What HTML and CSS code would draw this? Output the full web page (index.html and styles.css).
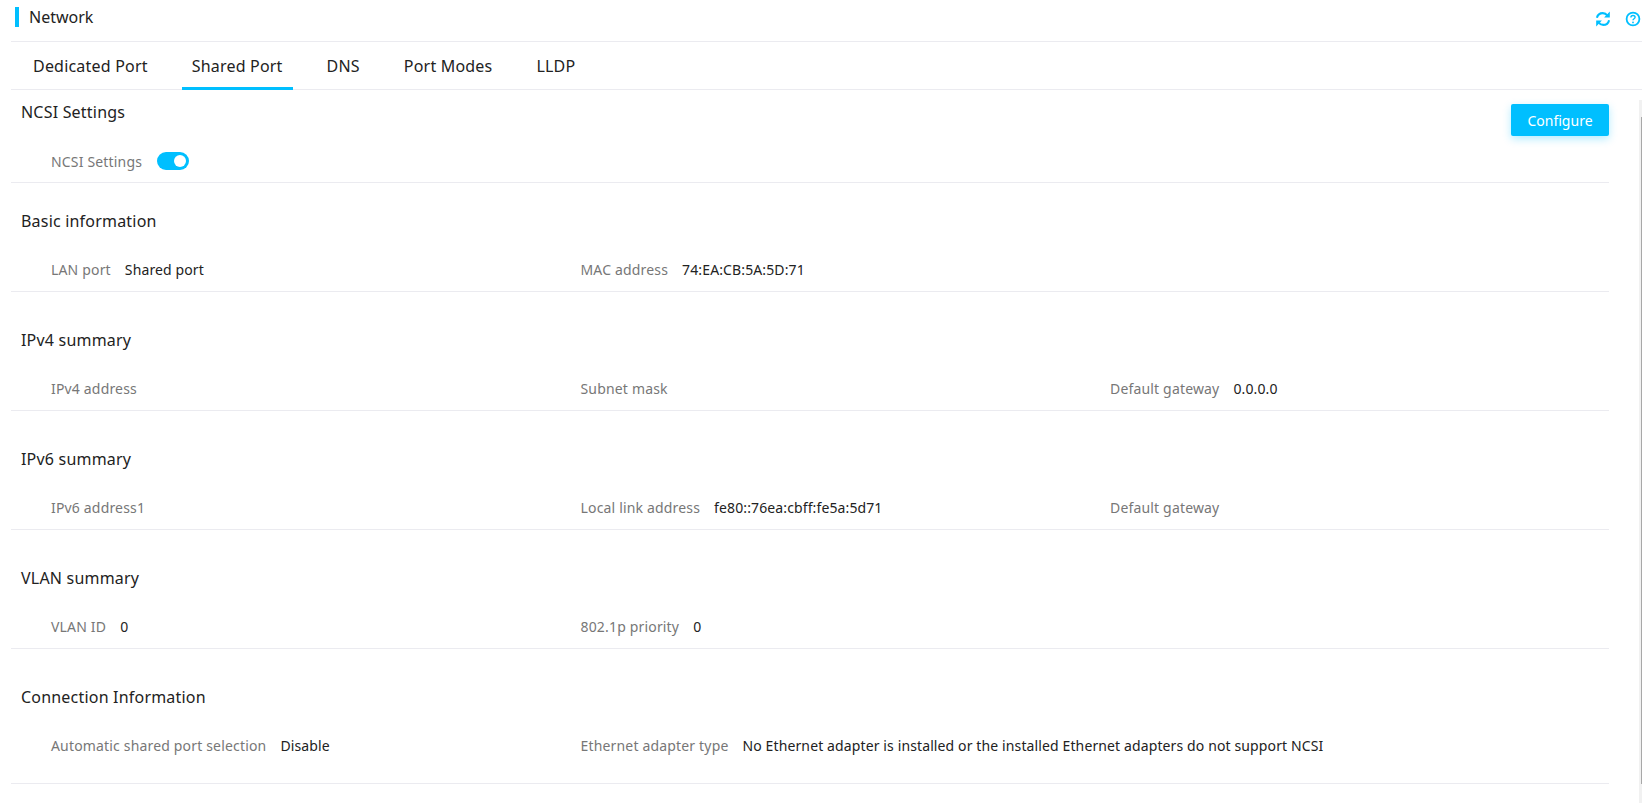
FILE: index.html
```html
<!DOCTYPE html>
<html lang="en">
<head>
<meta charset="utf-8">
<title>Network</title>
<link rel="stylesheet" href="styles.css">
</head>
<body>
<header class="top">
  <h1 class="title">Network</h1>
  <div class="tools">
    <svg class="icon" width="16" height="16" viewBox="0 0 16 16" fill="none" stroke="#00bfff" stroke-width="2.1"><path d="M1.9 6.8C2.6 3.9 5 2.1 7.8 2.1c1.9 0 3.4.8 4.5 2.4"/><path d="M14.8 .6v5.9H9.1" fill="#00bfff" stroke="none"/><path d="M14.1 9.2c-.7 2.9-3.1 4.7-5.9 4.7-1.9 0-3.4-.8-4.5-2.4"/><path d="M1.2 15.4V9.5h5.7" fill="#00bfff" stroke="none"/></svg>
    <svg class="icon" width="16" height="16" viewBox="0 0 16 16" fill="none" stroke="#00bfff"><circle cx="8" cy="8" r="6.4" stroke-width="1.8"/><path d="M5.9 6.4c0-1.2.9-1.9 2.1-1.9s2.1.7 2.1 1.8c0 1.5-2.1 1.5-2.1 3" stroke-width="1.4"/><circle cx="8" cy="11.4" r=".9" fill="#00bfff" stroke="none"/></svg>
  </div>
</header>
<nav class="tabs">
  <a class="tab">Dedicated Port</a>
  <a class="tab active">Shared Port</a>
  <a class="tab">DNS</a>
  <a class="tab">Port Modes</a>
  <a class="tab">LLDP</a>
</nav>
<div class="body">
  <main class="content">
    <section class="section first">
      <div class="section-head">
        <h2 class="section-title">NCSI Settings</h2>
        <button class="btn" type="button">Configure</button>
      </div>
      <div class="row">
        <div class="item"><span class="label">NCSI Settings</span><span class="switch"><span class="knob"></span></span></div>
      </div>
    </section>
    <section class="section basic">
      <h2 class="section-title">Basic information</h2>
      <div class="row">
        <div class="item"><span class="label">LAN port</span><span class="value">Shared port</span></div>
        <div class="item"><span class="label">MAC address</span><span class="value">74:EA:CB:5A:5D:71</span></div>
      </div>
    </section>
    <section class="section">
      <h2 class="section-title">IPv4 summary</h2>
      <div class="row">
        <div class="item"><span class="label">IPv4 address</span></div>
        <div class="item"><span class="label">Subnet mask</span></div>
        <div class="item"><span class="label">Default gateway</span><span class="value">0.0.0.0</span></div>
      </div>
    </section>
    <section class="section">
      <h2 class="section-title">IPv6 summary</h2>
      <div class="row">
        <div class="item"><span class="label">IPv6 address1</span></div>
        <div class="item"><span class="label">Local link address</span><span class="value">fe80::76ea:cbff:fe5a:5d71</span></div>
        <div class="item"><span class="label">Default gateway</span></div>
      </div>
    </section>
    <section class="section">
      <h2 class="section-title">VLAN summary</h2>
      <div class="row">
        <div class="item"><span class="label">VLAN ID</span><span class="value">0</span></div>
        <div class="item"><span class="label">802.1p priority</span><span class="value">0</span></div>
      </div>
    </section>
    <section class="section last">
      <h2 class="section-title">Connection Information</h2>
      <div class="row">
        <div class="item"><span class="label">Automatic shared port selection</span><span class="value">Disable</span></div>
        <div class="item wide"><span class="label">Ethernet adapter type</span><span class="value">No Ethernet adapter is installed or the installed Ethernet adapters do not support NCSI</span></div>
      </div>
    </section>
  </main>
  <div class="scrollbar"><div class="thumb"></div></div>
</div>
</body>
</html>
```
FILE: styles.css
```css
* { box-sizing: border-box; }
html, body { margin: 0; height: 100%; overflow: hidden; }
body {
  background: #fff;
  color: #222;
  font-family: "Noto Sans", "Open Sans", sans-serif;
  display: flex;
  flex-direction: column;
}
.top {
  height: 42px;
  margin-left: 11px;
  border-bottom: 1px solid #ebebf0;
  display: flex;
  align-items: flex-start;
  justify-content: space-between;
  flex: none;
}
.title {
  margin: 7px 0 0 4px;
  padding-left: 10px;
  border-left: 4px solid #00bfff;
  height: 20px;
  font-size: 16px;
  line-height: 20px;
  font-weight: 400;
}
.tools {
  display: flex;
  gap: 14px;
  margin: 11px 1px 0 0;
}
.icon { display: block; }
.tabs {
  height: 48px;
  margin-left: 11px;
  padding-left: 12px;
  border-bottom: 1px solid #ebebf0;
  display: flex;
  gap: 24px;
  flex: none;
}
.tab {
  height: 48px;
  padding: 0 10px;
  font-size: 16px;
  letter-spacing: .2px;
  line-height: 48px;
}
.tab.active { border-bottom: 3px solid #00bfff; }
.body { flex: 1; display: flex; min-height: 0; }
.content { flex: 1; min-width: 0; padding: 0 30px 0 11px; }
.section {
  height: 119px;
  border-bottom: 1px solid #ebebf0;
}
.section.first { height: 93px; }
.section.basic { height: 109px; }
.section.last { height: 135px; }
.section-head {
  display: flex;
  justify-content: space-between;
  align-items: flex-start;
  height: 0;
}
.section-title {
  margin: 0;
  padding: 37px 0 0 10px;
  font-size: 16px;
  letter-spacing: .2px;
  line-height: 22px;
  font-weight: 400;
}
.first .section-title { padding-top: 11px; }
.basic .section-title { padding-top: 27px; }
.btn {
  margin-top: 14px;
  width: 98px;
  height: 32px;
  border: 0;
  border-radius: 2px;
  background: #00bfff;
  color: #fff;
  font: inherit;
  font-size: 14px;
  box-shadow: 0 3px 8px rgba(0, 191, 255, .3);
}
.row {
  display: grid;
  grid-template-columns: repeat(3, 529.5px);
  padding: 26px 0 0 40px;
}
.first .row { padding-top: 60px; }
.item { display: flex; align-items: center; gap: 14px; height: 22px; font-size: 14px; letter-spacing: .17px; white-space: nowrap; }
.wide { grid-column: span 2; }
.label { color: #777; }
.value { color: #222; letter-spacing: .12px; }
.switch {
  width: 32px;
  height: 18px;
  margin-left: 1px;
  border-radius: 9px;
  background: #00bfff;
  display: flex;
  align-items: center;
  justify-content: flex-end;
  padding-right: 3px;
}
.knob { width: 12px; height: 12px; border-radius: 50%; background: #fff; }
.scrollbar { width: 3px; margin-top: 10px; background: #f1f1f1; flex: none; padding: 17px 0 0 2px; }
.thumb { width: 1px; height: 667px; background: #a8a8a8; }
```
